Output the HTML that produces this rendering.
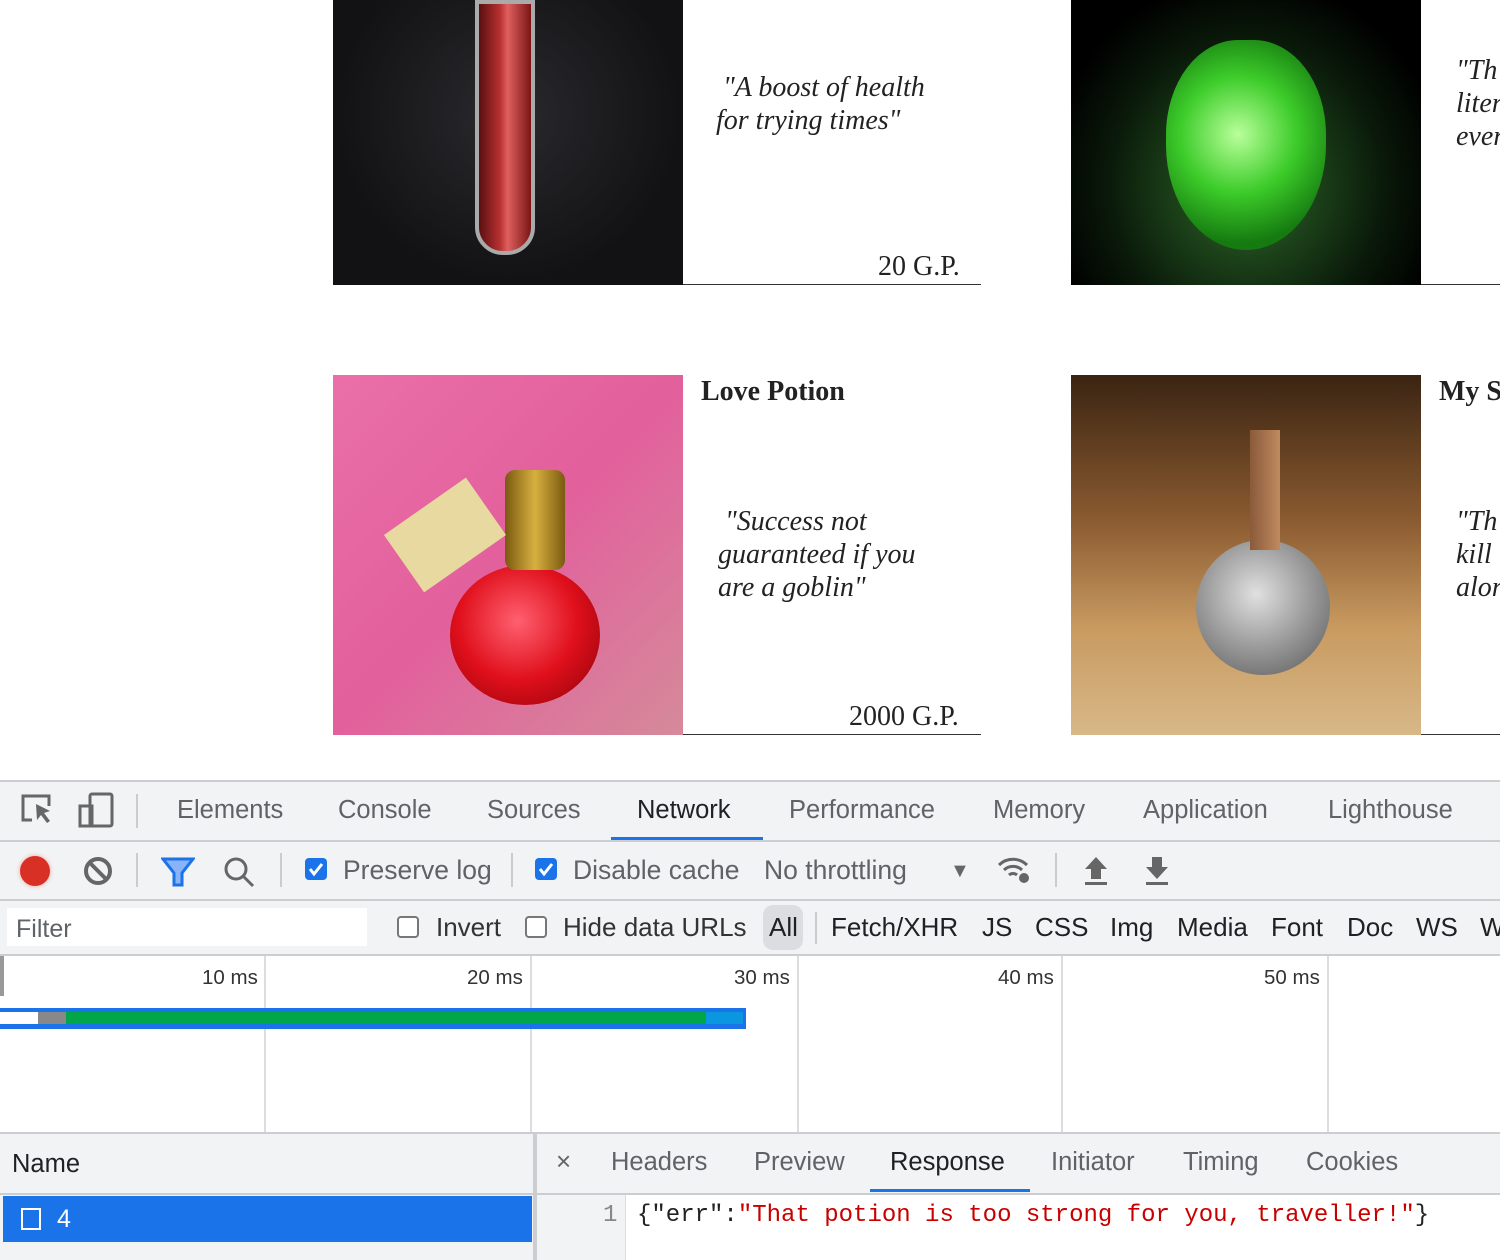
<!DOCTYPE html>
<html><head><meta charset="utf-8"><style>
*{margin:0;padding:0;box-sizing:border-box}
body{width:1500px;height:1260px;overflow:hidden;background:#fff;position:relative;font-family:"Liberation Sans",Arial,sans-serif}
.a{position:absolute;white-space:nowrap}
.serif{font-family:"Liberation Serif",serif;color:#222}
.q{font-style:italic;font-size:28px;line-height:33px}
.price{font-size:28px}
.dt{color:#5f6368;font-size:25.5px}
.sep{position:absolute;width:2px;background:#ccc}
.cb{position:absolute;width:22px;height:22px;border-radius:4px}
.on{background:#1a73e8}
.off{border:2px solid #777;background:#fff}
.grid{position:absolute;top:956px;height:176px;width:2px;background:#ddd}
.ft{position:absolute;top:912px;color:#202124;font-size:26px}
</style></head><body>
<!-- images -->
<div class="a" style="left:333px;top:0;width:350px;height:285px;background:radial-gradient(ellipse at 50% 40%,#2a2a2e,#121214 70%)"></div>
<div class="a" style="left:475px;top:0;width:60px;height:255px;border-radius:0 0 28px 28px;background:linear-gradient(90deg,#5a1010,#b83030 40%,#e06060 55%,#7a1515);border:4px solid #aaa"></div>
<div class="a" style="left:1071px;top:0;width:350px;height:285px;background:radial-gradient(ellipse at 50% 65%,#2f6b2a,#0a1a0a 55%,#000 80%)"></div>
<div class="a" style="left:1166px;top:40px;width:160px;height:210px;border-radius:45% 45% 50% 50%;background:radial-gradient(circle at 45% 45%,#b9ff9a,#3dcc2a 40%,#157a10 75%)"></div>
<div class="a" style="left:333px;top:375px;width:350px;height:360px;background:linear-gradient(135deg,#ea6fa9,#e2609c 50%,#d58a9a)"></div>
<div class="a" style="left:450px;top:565px;width:150px;height:140px;border-radius:50%;background:radial-gradient(circle at 45% 40%,#ff6070,#e0101c 50%,#8a0008)"></div>
<div class="a" style="left:505px;top:470px;width:60px;height:100px;background:linear-gradient(90deg,#7a5a10,#d8b040,#7a5a10);border-radius:10px"></div>
<div class="a" style="left:395px;top:500px;width:100px;height:70px;background:#e8d9a0;transform:rotate(-35deg)"></div>
<div class="a" style="left:1071px;top:375px;width:350px;height:360px;background:linear-gradient(180deg,#3a2412,#8a5a30 40%,#c89a60 70%,#d8b888)"></div>
<div class="a" style="left:1196px;top:540px;width:134px;height:135px;border-radius:50%;background:radial-gradient(circle at 45% 40%,#e0e0e0,#999 50%,#555)"></div>
<div class="a" style="left:1250px;top:430px;width:30px;height:120px;background:linear-gradient(90deg,#8a5a3a,#c08a60)"></div>
<!-- card text -->
<div class="a serif q" style="left:716px;top:71px;width:260px">&nbsp;"A boost of health<br>for trying times"</div>
<div class="a serif price" style="left:878px;top:251px">20 G.P.</div>
<div class="a" style="left:683px;top:284px;width:298px;height:1px;background:#333"></div>
<div class="a serif q" style="left:1456px;top:54px">"Th<br>liter<br>ever</div>
<div class="a" style="left:1421px;top:284px;width:79px;height:1px;background:#333"></div>
<div class="a serif" style="left:701px;top:376px;font-size:28px;font-weight:bold">Love Potion</div>
<div class="a serif q" style="left:718px;top:505px;width:260px">&nbsp;"Success not<br>guaranteed if you<br>are a goblin"</div>
<div class="a serif price" style="left:849px;top:701px">2000 G.P.</div>
<div class="a" style="left:683px;top:734px;width:298px;height:1px;background:#333"></div>
<div class="a serif" style="left:1439px;top:376px;font-size:28px;font-weight:bold">My S</div>
<div class="a serif q" style="left:1456px;top:505px">"Th<br>kill<br>alor</div>
<div class="a" style="left:1421px;top:734px;width:79px;height:1px;background:#333"></div>
<!-- devtools -->
<div class="a" style="left:0;top:780px;width:1500px;height:480px;background:#f1f3f4;border-top:2px solid #cbcdd1"></div>
<div class="a" style="left:0;top:840px;width:1500px;height:2px;background:#cbcdd1"></div>
<div class="a" style="left:0;top:899px;width:1500px;height:2px;background:#cbcdd1"></div>
<div class="a" style="left:0;top:954px;width:1500px;height:2px;background:#cbcdd1"></div>
<svg class="a" style="left:18px;top:792px" width="100" height="40" viewBox="0 0 100 40"><path d="M14 28H5V4h26v10" fill="none" stroke="#666" stroke-width="3"/><path d="M18 12l14 7-6 2 6 8-3 2-6-8-4 5z" fill="#666"/><rect x="72" y="2" width="22" height="32" rx="2" fill="none" stroke="#666" stroke-width="3"/><rect x="62" y="14" width="12" height="20" fill="none" stroke="#666" stroke-width="3"/></svg>
<div class="sep" style="left:136px;top:794px;height:34px"></div>
<div class="a dt" style="left:177px;top:796px">Elements</div>
<div class="a dt" style="left:338px;top:796px">Console</div>
<div class="a dt" style="left:487px;top:796px">Sources</div>
<div class="a dt" style="left:637px;top:796px;color:#202124">Network</div>
<div class="a" style="left:611px;top:837px;width:152px;height:3px;background:#1a73e8"></div>
<div class="a dt" style="left:789px;top:796px">Performance</div>
<div class="a dt" style="left:993px;top:796px">Memory</div>
<div class="a dt" style="left:1143px;top:796px">Application</div>
<div class="a dt" style="left:1328px;top:796px">Lighthouse</div>
<!-- toolbar -->
<div class="a" style="left:20px;top:856px;width:30px;height:30px;border-radius:50%;background:#d93025;box-shadow:0 0 4px #f4a09a"></div>
<svg class="a" style="left:83px;top:856px" width="30" height="30"><circle cx="15" cy="15" r="12" fill="none" stroke="#666" stroke-width="4"/><path d="M7 7l16 16" stroke="#666" stroke-width="4"/></svg>
<div class="sep" style="left:136px;top:853px;height:34px"></div>
<svg class="a" style="left:161px;top:857px" width="34" height="30"><path d="M2 2h30L21 16v12h-8V16z" fill="#8ab4f8" stroke="#1a73e8" stroke-width="3"/></svg>
<svg class="a" style="left:222px;top:855px" width="34" height="34"><circle cx="14" cy="14" r="10" fill="none" stroke="#666" stroke-width="3"/><path d="M21 21l10 10" stroke="#666" stroke-width="3"/></svg>
<div class="sep" style="left:280px;top:853px;height:34px"></div>
<div class="cb on" style="left:305px;top:858px"></div><svg class="a" style="left:305px;top:858px" width="22" height="22"><path d="M5 11l4 5 8-10" stroke="#fff" stroke-width="3" fill="none"/></svg>
<div class="a dt" style="left:343px;top:855px;font-size:26.5px">Preserve log</div>
<div class="sep" style="left:511px;top:853px;height:34px"></div>
<div class="cb on" style="left:535px;top:858px"></div><svg class="a" style="left:535px;top:858px" width="22" height="22"><path d="M5 11l4 5 8-10" stroke="#fff" stroke-width="3" fill="none"/></svg>
<div class="a dt" style="left:573px;top:855px;font-size:26.5px">Disable cache</div>
<div class="a dt" style="left:764px;top:855px;font-size:26.5px">No throttling</div>
<div class="a" style="left:950px;top:860px;color:#666;font-size:20px">▼</div>
<svg class="a" style="left:996px;top:853px" width="40" height="34"><path d="M3 12a20 20 0 0 1 28 0M8 17a13 13 0 0 1 18 0M13 22a6 6 0 0 1 8 0" stroke="#666" stroke-width="3" fill="none"/><circle cx="28" cy="25" r="5" fill="#666"/></svg>
<div class="sep" style="left:1055px;top:853px;height:34px"></div>
<svg class="a" style="left:1082px;top:855px" width="30" height="32"><path d="M14 2l11 12h-6v10h-10V14H3z" fill="#666"/><rect x="3" y="27" width="22" height="3" fill="#666"/></svg>
<svg class="a" style="left:1143px;top:855px" width="30" height="32"><path d="M9 2h10v10h6L14 24 3 12h6z" fill="#666"/><rect x="3" y="27" width="22" height="3" fill="#666"/></svg>
<!-- filter row -->
<div class="a" style="left:7px;top:908px;width:360px;height:38px;background:#fff"></div>
<div class="a" style="left:16px;top:915px;color:#5f6368;font-size:25px">Filter</div>
<div class="cb off" style="left:397px;top:916px"></div>
<div class="a" style="left:436px;top:912px;color:#333;font-size:26px">Invert</div>
<div class="cb off" style="left:525px;top:916px"></div>
<div class="a" style="left:563px;top:912px;color:#333;font-size:26px">Hide data URLs</div>
<div class="a" style="left:763px;top:905px;width:40px;height:45px;border-radius:10px;background:#dcdde0"></div>
<div class="a" style="left:769px;top:912px;color:#202124;font-size:26px">All</div>
<div class="sep" style="left:815px;top:912px;height:32px"></div>
<div class="ft" style="left:831px">Fetch/XHR</div>
<div class="ft" style="left:982px">JS</div>
<div class="ft" style="left:1035px">CSS</div>
<div class="ft" style="left:1110px">Img</div>
<div class="ft" style="left:1177px">Media</div>
<div class="ft" style="left:1271px">Font</div>
<div class="ft" style="left:1347px">Doc</div>
<div class="ft" style="left:1416px">WS</div>
<div class="ft" style="left:1480px">W</div>
<!-- timeline -->
<div class="a" style="left:0;top:956px;width:1500px;height:176px;background:#fff"></div>
<div class="a" style="left:0;top:956px;width:4px;height:40px;background:#999"></div>
<div class="grid" style="left:264px"></div><div class="grid" style="left:530px"></div><div class="grid" style="left:797px"></div><div class="grid" style="left:1061px"></div><div class="grid" style="left:1327px"></div>
<div class="a" style="left:202px;top:966px;color:#333;font-size:20.5px">10 ms</div>
<div class="a" style="left:467px;top:966px;color:#333;font-size:20.5px">20 ms</div>
<div class="a" style="left:734px;top:966px;color:#333;font-size:20.5px">30 ms</div>
<div class="a" style="left:998px;top:966px;color:#333;font-size:20.5px">40 ms</div>
<div class="a" style="left:1264px;top:966px;color:#333;font-size:20.5px">50 ms</div>
<div class="a" style="left:0;top:1008px;width:746px;height:21px;background:#1a73e8"></div>
<div class="a" style="left:0;top:1012px;width:743px;height:12px;background:#fff"></div>
<div class="a" style="left:38px;top:1012px;width:28px;height:12px;background:#888"></div>
<div class="a" style="left:66px;top:1012px;width:640px;height:12px;background:#00a647"></div>
<div class="a" style="left:706px;top:1012px;width:37px;height:12px;background:#0a97e0"></div>
<div class="a" style="left:0;top:1132px;width:1500px;height:2px;background:#cbcdd1"></div>
<!-- bottom -->
<div class="a" style="left:533px;top:1134px;width:4px;height:126px;background:#cbcdd1"></div>
<div class="a" style="left:12px;top:1150px;color:#202124;font-size:25.5px">Name</div>
<div class="a" style="left:0;top:1193px;width:533px;height:2px;background:#cbcdd1"></div>
<div class="a" style="left:3px;top:1196px;width:529px;height:46px;background:#1a73e8"></div>
<div class="a" style="left:21px;top:1208px;width:20px;height:22px;border:2px solid #fff"></div>
<div class="a" style="left:57px;top:1205px;color:#fff;font-size:25px">4</div>
<div class="a" style="left:537px;top:1193px;width:963px;height:2px;background:#cbcdd1"></div>
<div class="a" style="left:537px;top:1195px;width:963px;height:65px;background:#fff"></div>
<div class="a" style="left:556px;top:1146px;color:#666;font-size:26px">×</div>
<div class="a dt" style="left:611px;top:1148px">Headers</div>
<div class="a dt" style="left:754px;top:1148px">Preview</div>
<div class="a dt" style="left:890px;top:1148px;color:#202124">Response</div>
<div class="a" style="left:870px;top:1189px;width:160px;height:3px;background:#1a73e8"></div>
<div class="a dt" style="left:1051px;top:1148px">Initiator</div>
<div class="a dt" style="left:1183px;top:1148px">Timing</div>
<div class="a dt" style="left:1306px;top:1148px">Cookies</div>
<div class="a" style="left:537px;top:1195px;width:89px;height:65px;background:#f1f3f4;border-right:1px solid #ddd"></div>
<div class="a" style="left:603px;top:1202px;color:#888;font-family:'Liberation Mono',monospace;font-size:24px">1</div>
<div class="a" style="left:637px;top:1202px;color:#222;font-family:'Liberation Mono',monospace;font-size:24px;white-space:pre">{"err":<span style="color:#c80000">"That potion is too strong for you, traveller!"</span>}</div>
</body></html>
